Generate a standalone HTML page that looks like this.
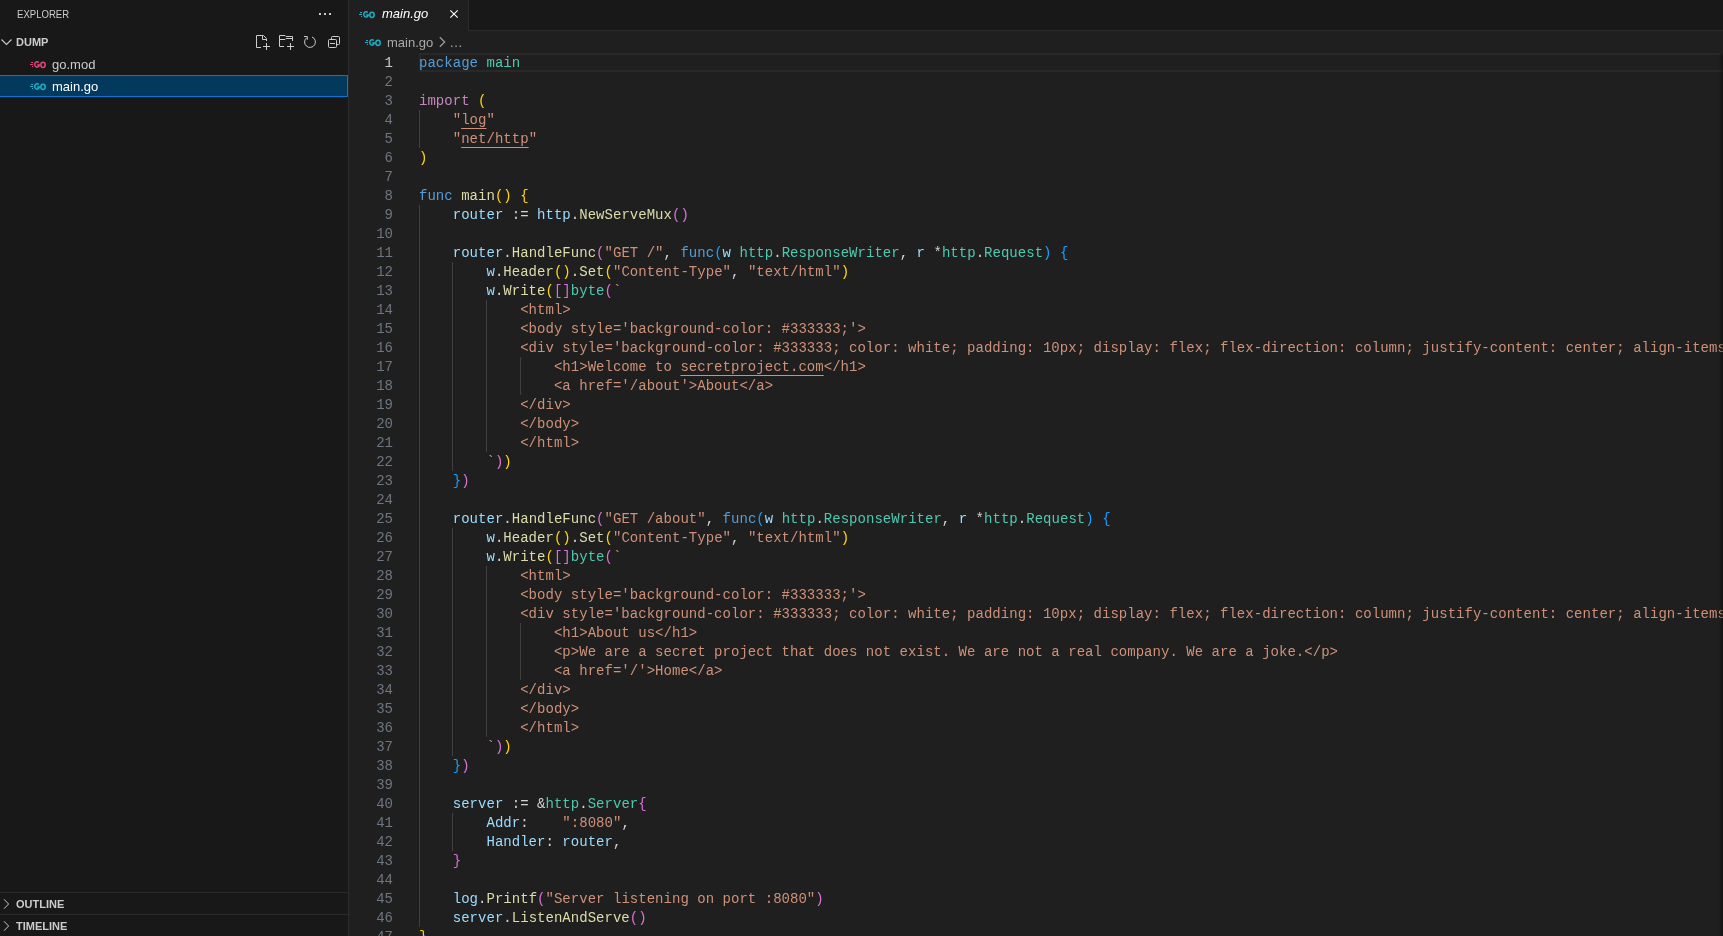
<!DOCTYPE html>
<html><head><meta charset="utf-8">
<style>
*{margin:0;padding:0;box-sizing:border-box}
html,body{width:1723px;height:936px;overflow:hidden;background:#1f1f1f}
body{position:relative;font-family:"Liberation Sans",sans-serif;color:#cccccc}
#root{position:absolute;left:0;top:0;width:1723px;height:936px;overflow:hidden;will-change:transform}
#shadow{position:absolute;left:1719px;top:53px;width:4px;height:883px;background:linear-gradient(to left,rgba(0,0,0,0.38),rgba(0,0,0,0))}
#side{position:absolute;left:0;top:0;width:348px;height:936px;background:#181818}
#sideb{position:absolute;left:348px;top:0;width:1px;height:936px;background:#2b2b2b}
.abs{position:absolute;white-space:pre}
.go{position:absolute}
#tabbar{position:absolute;left:349px;top:0;width:1374px;height:31px;background:#181818}
#tabbarb{position:absolute;left:468px;top:30px;width:1255px;height:1px;background:#2b2b2b}
#tab{position:absolute;left:349px;top:0;width:119px;height:31px;background:#1f1f1f}
#tabr{position:absolute;left:468px;top:0;width:1px;height:31px;background:#2b2b2b}
#editor{position:absolute;left:349px;top:31px;width:1374px;height:905px;background:#1f1f1f;overflow:hidden}
.code{font-family:"Liberation Mono",monospace;font-size:14px;line-height:19px}
.ln{position:absolute;left:419px;padding-top:1px;white-space:pre;height:19px;font-family:"Liberation Mono",monospace;font-size:14px;line-height:19px;color:#d4d4d4;letter-spacing:0.03px}
.num{position:absolute;left:349px;padding-top:1px;width:44px;text-align:right;height:19px;font-family:"Liberation Mono",monospace;font-size:14px;line-height:19px;color:#6e7681}
.num.act{color:#cccccc}
.g{position:absolute;width:1px;background:#404040}
#curline{position:absolute;left:419px;top:53px;width:1304px;height:19px;border:2px solid #282828;border-right:none}
.k{color:#569cd6}.c{color:#c586c0}.t{color:#4ec9b0}.f{color:#dcdcaa}.v{color:#9cdcfe}.s{color:#ce9178}.su{color:#ce9178;text-decoration:underline;text-underline-offset:4px}.p{color:#d4d4d4}
.b1{color:#ffd700}.b2{color:#da70d6}.b3{color:#179fff}
</style></head><body><div id="root">
<div id="side"></div>
<div id="sideb"></div>
<div class="abs" style="left:17px;top:7px;font-size:11px;line-height:14px;color:#cccccc;transform:scaleX(0.87);transform-origin:0 0">EXPLORER</div>
<div style="position:absolute;left:319px;top:13px;width:2px;height:2px;background:#cccccc"></div>
<div style="position:absolute;left:324px;top:13px;width:2px;height:2px;background:#cccccc"></div>
<div style="position:absolute;left:329px;top:13px;width:2px;height:2px;background:#cccccc"></div>
<!-- DUMP row -->
<svg style="position:absolute;left:0;top:36px" width="14" height="12" viewBox="0 0 14 12"><path d="M1.5 3.5 L6.5 8.5 L11.5 3.5" fill="none" stroke="#cccccc" stroke-width="1.1"/></svg>
<div class="abs" style="left:16px;top:35px;font-size:11px;line-height:14px;font-weight:bold;color:#cccccc">DUMP</div>
<!-- action icons -->
<svg style="position:absolute;left:252px;top:31px" width="96" height="23" viewBox="0 0 96 23" fill="none" stroke="#cccccc" stroke-width="1">
<path d="M9 16.5 H4.5 V4.5 H11.5 L14.5 7.5 V10"/><path d="M10.5 4.5 V8.5 H14.5"/><path d="M14.5 12 V19 M11 15.5 H18"/>
<path d="M32 15.5 H27.5 V4.5 H33 L34 5.5 H40.5 V10"/><path d="M27.5 8.5 H33 L34 7.5 H40.5"/><path d="M38.5 12 V19 M35 15.5 H42"/>
<path d="M60 5.99 A5.4 5.4 0 1 1 54.53 6.86"/><path d="M52 5.5 H55.3 V8.8"/>
<rect x="76.5" y="8.5" width="8" height="8" rx="1"/><path d="M79.5 8.5 V6.5 Q79.5 5.5 80.5 5.5 H86.5 Q87.5 5.5 87.5 6.5 V12.5 Q87.5 13.5 86.5 13.5 H84.5"/><path d="M78 12.5 H83"/>
</svg>
<!-- files -->
<svg class="go" style="left:30px;top:60px" width="17" height="9" viewBox="0 0 17 9"><g fill="#e8447c"><rect x="1" y="2" width="2" height="1"/><rect x="0" y="4" width="3" height="1"/><rect x="2" y="6" width="1" height="1"/></g><g fill="none" stroke="#e8447c" stroke-width="1.5"><path d="M8.7 2.55 A2.3 2.65 0 1 0 9.3 5.0 H7.2"/><ellipse cx="13.0" cy="4.8" rx="2.2" ry="2.6"/></g></svg>
<div class="abs" style="left:52px;top:57px;font-size:13px;line-height:16px;color:#cccccc">go.mod</div>
<div style="position:absolute;left:-1px;top:75px;width:349px;height:22px;background:#04395e;border:1px solid #0078d4"></div>
<svg class="go" style="left:30px;top:82px" width="17" height="9" viewBox="0 0 17 9"><g fill="#1bb0c8"><rect x="1" y="2" width="2" height="1"/><rect x="0" y="4" width="3" height="1"/><rect x="2" y="6" width="1" height="1"/></g><g fill="none" stroke="#1bb0c8" stroke-width="1.5"><path d="M8.7 2.55 A2.3 2.65 0 1 0 9.3 5.0 H7.2"/><ellipse cx="13.0" cy="4.8" rx="2.2" ry="2.6"/></g></svg>
<div class="abs" style="left:52px;top:79px;font-size:13px;line-height:16px;color:#ffffff">main.go</div>
<!-- outline / timeline -->
<div style="position:absolute;left:0;top:892px;width:348px;height:1px;background:#2b2b2b"></div>
<svg style="position:absolute;left:0;top:897px" width="14" height="14" viewBox="0 0 14 14"><path d="M4 2.3 L8.6 7 L4 11.7" fill="none" stroke="#c8c8c8" stroke-width="1"/></svg>
<div class="abs" style="left:16px;top:897px;font-size:11px;line-height:14px;font-weight:bold;color:#cccccc">OUTLINE</div>
<div style="position:absolute;left:0;top:914px;width:348px;height:1px;background:#2b2b2b"></div>
<svg style="position:absolute;left:0;top:919px" width="14" height="14" viewBox="0 0 14 14"><path d="M4 2.3 L8.6 7 L4 11.7" fill="none" stroke="#c8c8c8" stroke-width="1"/></svg>
<div class="abs" style="left:16px;top:919px;font-size:11px;line-height:14px;font-weight:bold;color:#cccccc">TIMELINE</div>
<!-- tabs -->
<div id="tabbar"></div>
<div id="tabbarb"></div>
<div id="tab"></div>
<div id="tabr"></div>
<svg class="go" style="left:359px;top:10px" width="17" height="9" viewBox="0 0 17 9"><g fill="#1bb0c8"><rect x="1" y="2" width="2" height="1"/><rect x="0" y="4" width="3" height="1"/><rect x="2" y="6" width="1" height="1"/></g><g fill="none" stroke="#1bb0c8" stroke-width="1.5"><path d="M8.7 2.55 A2.3 2.65 0 1 0 9.3 5.0 H7.2"/><ellipse cx="13.0" cy="4.8" rx="2.2" ry="2.6"/></g></svg>
<div class="abs" style="left:382px;top:6px;font-size:13px;line-height:16px;font-style:italic;color:#ffffff">main.go</div>
<svg style="position:absolute;left:446px;top:6px" width="16" height="16" viewBox="0 0 16 16"><path d="M4.3 4.3 L11.7 11.7 M11.7 4.3 L4.3 11.7" stroke="#ffffff" stroke-width="1.1"/></svg>
<!-- breadcrumbs -->
<svg class="go" style="left:365px;top:38px" width="17" height="9" viewBox="0 0 17 9"><g fill="#1bb0c8"><rect x="1" y="2" width="2" height="1"/><rect x="0" y="4" width="3" height="1"/><rect x="2" y="6" width="1" height="1"/></g><g fill="none" stroke="#1bb0c8" stroke-width="1.5"><path d="M8.7 2.55 A2.3 2.65 0 1 0 9.3 5.0 H7.2"/><ellipse cx="13.0" cy="4.8" rx="2.2" ry="2.6"/></g></svg>
<div class="abs" style="left:387px;top:35px;font-size:13px;line-height:16px;color:#a9a9a9">main.go</div>
<svg style="position:absolute;left:436px;top:36px" width="12" height="14" viewBox="0 0 12 14"><path d="M3.8 1.3 L8.7 6 L3.8 10.7" fill="none" stroke="#a0a0a0" stroke-width="1.2"/></svg>
<div class="abs" style="left:450px;top:35px;font-size:13px;line-height:16px;color:#a9a9a9;letter-spacing:0.6px">...</div>
<!-- editor -->
<div id="curline"></div>
<div class="g" style="left:419px;top:110px;height:38px"></div>
<div class="g" style="left:419px;top:205px;height:722px"></div>
<div class="g" style="left:452px;top:262px;height:209px"></div>
<div class="g" style="left:452px;top:528px;height:228px"></div>
<div class="g" style="left:452px;top:813px;height:38px"></div>
<div class="g" style="left:486px;top:300px;height:152px"></div>
<div class="g" style="left:486px;top:566px;height:171px"></div>
<div class="g" style="left:520px;top:357px;height:38px"></div>
<div class="g" style="left:520px;top:623px;height:57px"></div>
<div class="num act" style="top:53px">1</div>
<div class="num" style="top:72px">2</div>
<div class="num" style="top:91px">3</div>
<div class="num" style="top:110px">4</div>
<div class="num" style="top:129px">5</div>
<div class="num" style="top:148px">6</div>
<div class="num" style="top:167px">7</div>
<div class="num" style="top:186px">8</div>
<div class="num" style="top:205px">9</div>
<div class="num" style="top:224px">10</div>
<div class="num" style="top:243px">11</div>
<div class="num" style="top:262px">12</div>
<div class="num" style="top:281px">13</div>
<div class="num" style="top:300px">14</div>
<div class="num" style="top:319px">15</div>
<div class="num" style="top:338px">16</div>
<div class="num" style="top:357px">17</div>
<div class="num" style="top:376px">18</div>
<div class="num" style="top:395px">19</div>
<div class="num" style="top:414px">20</div>
<div class="num" style="top:433px">21</div>
<div class="num" style="top:452px">22</div>
<div class="num" style="top:471px">23</div>
<div class="num" style="top:490px">24</div>
<div class="num" style="top:509px">25</div>
<div class="num" style="top:528px">26</div>
<div class="num" style="top:547px">27</div>
<div class="num" style="top:566px">28</div>
<div class="num" style="top:585px">29</div>
<div class="num" style="top:604px">30</div>
<div class="num" style="top:623px">31</div>
<div class="num" style="top:642px">32</div>
<div class="num" style="top:661px">33</div>
<div class="num" style="top:680px">34</div>
<div class="num" style="top:699px">35</div>
<div class="num" style="top:718px">36</div>
<div class="num" style="top:737px">37</div>
<div class="num" style="top:756px">38</div>
<div class="num" style="top:775px">39</div>
<div class="num" style="top:794px">40</div>
<div class="num" style="top:813px">41</div>
<div class="num" style="top:832px">42</div>
<div class="num" style="top:851px">43</div>
<div class="num" style="top:870px">44</div>
<div class="num" style="top:889px">45</div>
<div class="num" style="top:908px">46</div>
<div class="num" style="top:927px">47</div>
<div class="num" style="top:946px">48</div>
<div class="ln" style="top:53px"><span class="k">package</span> <span class="t">main</span></div>
<div class="ln" style="top:72px"></div>
<div class="ln" style="top:91px"><span class="c">import</span> <span class="b1">(</span></div>
<div class="ln" style="top:110px">    <span class="s">"</span><span class="su">log</span><span class="s">"</span></div>
<div class="ln" style="top:129px">    <span class="s">"</span><span class="su">net/http</span><span class="s">"</span></div>
<div class="ln" style="top:148px"><span class="b1">)</span></div>
<div class="ln" style="top:167px"></div>
<div class="ln" style="top:186px"><span class="k">func</span> <span class="f">main</span><span class="b1">()</span> <span class="b1">{</span></div>
<div class="ln" style="top:205px">    <span class="v">router</span><span class="p"> := </span><span class="v">http</span><span class="p">.</span><span class="f">NewServeMux</span><span class="b2">()</span></div>
<div class="ln" style="top:224px"></div>
<div class="ln" style="top:243px">    <span class="v">router</span><span class="p">.</span><span class="f">HandleFunc</span><span class="b2">(</span><span class="s">"GET /"</span><span class="p">, </span><span class="k">func</span><span class="b3">(</span><span class="v">w</span> <span class="t">http</span><span class="p">.</span><span class="t">ResponseWriter</span><span class="p">, </span><span class="v">r</span> <span class="p">*</span><span class="t">http</span><span class="p">.</span><span class="t">Request</span><span class="b3">)</span> <span class="b3">{</span></div>
<div class="ln" style="top:262px">        <span class="v">w</span><span class="p">.</span><span class="f">Header</span><span class="b1">()</span><span class="p">.</span><span class="f">Set</span><span class="b1">(</span><span class="s">"Content-Type"</span><span class="p">, </span><span class="s">"text/html"</span><span class="b1">)</span></div>
<div class="ln" style="top:281px">        <span class="v">w</span><span class="p">.</span><span class="f">Write</span><span class="b1">(</span><span class="b2">[]</span><span class="t">byte</span><span class="b2">(</span><span class="s">`</span></div>
<div class="ln" style="top:300px">            <span class="s">&lt;html&gt;</span></div>
<div class="ln" style="top:319px">            <span class="s">&lt;body style='background-color: #333333;'&gt;</span></div>
<div class="ln" style="top:338px">            <span class="s">&lt;div style='background-color: #333333; color: white; padding: 10px; display: flex; flex-direction: column; justify-content: center; align-items: center; height: 100vh;'&gt;</span></div>
<div class="ln" style="top:357px">                <span class="s">&lt;h1&gt;Welcome to </span><span class="su">secretproject.com</span><span class="s">&lt;/h1&gt;</span></div>
<div class="ln" style="top:376px">                <span class="s">&lt;a href='/about'&gt;About&lt;/a&gt;</span></div>
<div class="ln" style="top:395px">            <span class="s">&lt;/div&gt;</span></div>
<div class="ln" style="top:414px">            <span class="s">&lt;/body&gt;</span></div>
<div class="ln" style="top:433px">            <span class="s">&lt;/html&gt;</span></div>
<div class="ln" style="top:452px">        <span class="s">`</span><span class="b2">)</span><span class="b1">)</span></div>
<div class="ln" style="top:471px">    <span class="b3">}</span><span class="b2">)</span></div>
<div class="ln" style="top:490px"></div>
<div class="ln" style="top:509px">    <span class="v">router</span><span class="p">.</span><span class="f">HandleFunc</span><span class="b2">(</span><span class="s">"GET /about"</span><span class="p">, </span><span class="k">func</span><span class="b3">(</span><span class="v">w</span> <span class="t">http</span><span class="p">.</span><span class="t">ResponseWriter</span><span class="p">, </span><span class="v">r</span> <span class="p">*</span><span class="t">http</span><span class="p">.</span><span class="t">Request</span><span class="b3">)</span> <span class="b3">{</span></div>
<div class="ln" style="top:528px">        <span class="v">w</span><span class="p">.</span><span class="f">Header</span><span class="b1">()</span><span class="p">.</span><span class="f">Set</span><span class="b1">(</span><span class="s">"Content-Type"</span><span class="p">, </span><span class="s">"text/html"</span><span class="b1">)</span></div>
<div class="ln" style="top:547px">        <span class="v">w</span><span class="p">.</span><span class="f">Write</span><span class="b1">(</span><span class="b2">[]</span><span class="t">byte</span><span class="b2">(</span><span class="s">`</span></div>
<div class="ln" style="top:566px">            <span class="s">&lt;html&gt;</span></div>
<div class="ln" style="top:585px">            <span class="s">&lt;body style='background-color: #333333;'&gt;</span></div>
<div class="ln" style="top:604px">            <span class="s">&lt;div style='background-color: #333333; color: white; padding: 10px; display: flex; flex-direction: column; justify-content: center; align-items: center; height: 100vh;'&gt;</span></div>
<div class="ln" style="top:623px">                <span class="s">&lt;h1&gt;About us&lt;/h1&gt;</span></div>
<div class="ln" style="top:642px">                <span class="s">&lt;p&gt;We are a secret project that does not exist. We are not a real company. We are a joke.&lt;/p&gt;</span></div>
<div class="ln" style="top:661px">                <span class="s">&lt;a href='/'&gt;Home&lt;/a&gt;</span></div>
<div class="ln" style="top:680px">            <span class="s">&lt;/div&gt;</span></div>
<div class="ln" style="top:699px">            <span class="s">&lt;/body&gt;</span></div>
<div class="ln" style="top:718px">            <span class="s">&lt;/html&gt;</span></div>
<div class="ln" style="top:737px">        <span class="s">`</span><span class="b2">)</span><span class="b1">)</span></div>
<div class="ln" style="top:756px">    <span class="b3">}</span><span class="b2">)</span></div>
<div class="ln" style="top:775px"></div>
<div class="ln" style="top:794px">    <span class="v">server</span><span class="p"> := </span><span class="p">&amp;</span><span class="t">http</span><span class="p">.</span><span class="t">Server</span><span class="b2">{</span></div>
<div class="ln" style="top:813px">        <span class="v">Addr</span><span class="p">:    </span><span class="s">":8080"</span><span class="p">,</span></div>
<div class="ln" style="top:832px">        <span class="v">Handler</span><span class="p">: </span><span class="v">router</span><span class="p">,</span></div>
<div class="ln" style="top:851px">    <span class="b2">}</span></div>
<div class="ln" style="top:870px"></div>
<div class="ln" style="top:889px">    <span class="v">log</span><span class="p">.</span><span class="f">Printf</span><span class="b2">(</span><span class="s">"Server listening on port :8080"</span><span class="b2">)</span></div>
<div class="ln" style="top:908px">    <span class="v">server</span><span class="p">.</span><span class="f">ListenAndServe</span><span class="b2">()</span></div>
<div class="ln" style="top:927px"><span class="b1">}</span></div>
<div class="ln" style="top:946px"></div>
<div id="shadow"></div>
</div></body></html>
